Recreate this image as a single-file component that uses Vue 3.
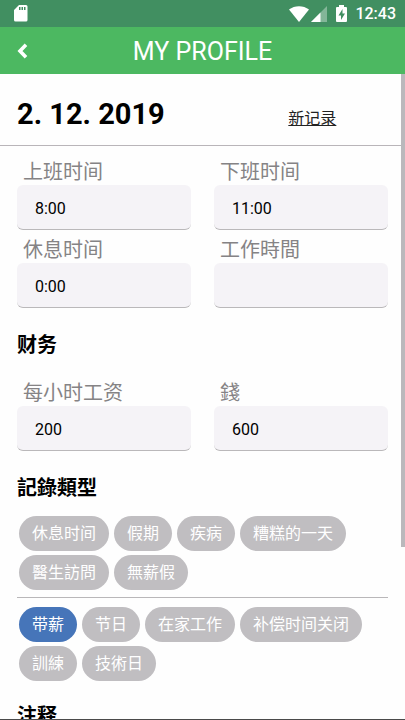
<script setup>
import { ref } from 'vue'

const times = ref([
  { id: 'start', label: '上班时间', lang: 'zh-CN', value: '8:00' },
  { id: 'end', label: '下班时间', lang: 'zh-CN', value: '11:00' },
  { id: 'break', label: '休息时间', lang: 'zh-CN', value: '0:00' },
  { id: 'hours', label: '工作時間', lang: 'zh-TW', value: '' }
])

const money = ref([
  { id: 'rate', label: '每小时工资', lang: 'zh-CN', value: '200' },
  { id: 'total', label: '錢', lang: 'zh-TW', value: '600' }
])

const absences = ['休息时间', '假期', '疾病', '糟糕的一天', '醫生訪問', '無薪假']
const paid = ['带薪', '节日', '在家工作', '补偿时间关闭', '訓練', '技術日']
const selected = ref('带薪')
</script>

<template>
  <div class="screen">
    <div class="status">
      <svg class="sd" width="14" height="17" viewBox="0 0 14 17">
        <path fill="#fff" fill-rule="evenodd" d="M5 0h7a1.500 1.500 0 0 1 1.500 1.500v13.500a1.500 1.500 0 0 1-1.500 1.500H1.500A1.500 1.500 0 0 1 0 15V5zM5 2v3h1.500V2zM7.500 2v3H9V2zM10 2v3h1.500V2z" />
      </svg>
      <div class="indicators">
        <svg class="wifi" width="20" height="16" viewBox="0 0 20 16">
          <path fill="#fff" d="M0 3.500C5.500-1 14.500-1 20 3.500L10 16z" />
        </svg>
        <svg class="signal" width="16" height="16" viewBox="0 0 16 16">
          <path fill="#fff" fill-opacity=".35" d="M16 0v16H0z" />
          <path fill="#fff" d="M9.500 6.500V16H0z" />
        </svg>
        <svg class="battery" width="11" height="17" viewBox="0 0 11 17">
          <path fill="#fff" fill-rule="evenodd" d="M3 0h5v2h2a1 1 0 0 1 1 1v13a1 1 0 0 1-1 1H1a1 1 0 0 1-1-1V3a1 1 0 0 1 1-1h2zM6.500 4L2.500 10.500h2.500V15l4-6.500H6.500z" />
        </svg>
        <span class="clock">12:43</span>
      </div>
    </div>

    <header class="bar">
      <button class="back" type="button" aria-label="Back">
        <svg width="11" height="16" viewBox="0 0 11 16">
          <path d="M9 1.800L3 8l6 6.200" fill="none" stroke="#fff" stroke-width="3.600" />
        </svg>
      </button>
      <h1 class="title">MY PROFILE</h1>
    </header>

    <main class="body">
      <div class="date-row">
        <h2 class="date">2. 12. 2019</h2>
        <a class="new" href="#" lang="zh-CN">新记录</a>
      </div>

      <div class="content">
        <div class="fields">
          <div v-for="f in times" :key="f.id" class="field">
            <label :for="f.id" :lang="f.lang">{{ f.label }}</label>
            <input :id="f.id" v-model="f.value" type="text" />
          </div>
        </div>

        <h3 class="heading" lang="zh-CN">财务</h3>
        <div class="fields finance">
          <div v-for="f in money" :key="f.id" class="field">
            <label :for="f.id" :lang="f.lang">{{ f.label }}</label>
            <input :id="f.id" v-model="f.value" type="text" />
          </div>
        </div>

        <h3 class="heading" lang="zh-TW">記錄類型</h3>
        <div class="chips">
          <button v-for="c in absences" :key="c" type="button" class="chip" :class="{ on: selected === c }" :aria-pressed="selected === c" @click="selected = c">{{ c }}</button>
        </div>
        <hr class="rule" />
        <div class="chips">
          <button v-for="c in paid" :key="c" type="button" class="chip" :class="{ on: selected === c }" :aria-pressed="selected === c" @click="selected = c">{{ c }}</button>
        </div>

        <h3 class="heading notes" lang="zh-CN">注释</h3>
      </div>
      <div class="thumb"></div>
    </main>
  </div>
</template>

<style>
body {
  margin: 0;
}
</style>

<style scoped>
* {
  box-sizing: border-box;
}
.screen {
  display: flex;
  flex-direction: column;
  height: 100vh;
  overflow: hidden;
  background: #fefefe;
  border-bottom: 1px solid #4a4a4a;
  font-family: Roboto, "Noto Sans CJK SC", sans-serif;
  color: #000;
}
.status {
  flex: none;
  display: flex;
  align-items: center;
  justify-content: space-between;
  height: 27px;
  padding: 0 9px 0 14px;
  background: #418f61;
}
.indicators {
  display: flex;
  align-items: center;
}
.signal {
  margin-left: 2px;
}
.battery {
  margin-left: 9px;
}
.clock {
  margin-left: 8px;
  color: #fff;
  font-size: 16px;
  font-weight: 500;
  line-height: 28px;
}
.bar {
  flex: none;
  display: grid;
  grid-template-columns: 48px 1fr 48px;
  height: 47px;
  background: #4cb861;
}
.back {
  display: flex;
  align-items: center;
  padding: 0 0 3px 17px;
  border: 0;
  background: none;
}
.title {
  margin: 0;
  color: #fff;
  font-size: 25px;
  font-weight: 400;
  line-height: 50px;
  text-align: center;
}
.body {
  position: relative;
  flex: 1;
  min-height: 0;
  overflow: hidden;
}
.date-row {
  display: grid;
  grid-template-columns: 2fr 1fr;
  align-items: end;
  height: 72px;
  padding: 0 17px 13px;
  border-bottom: 1px solid #b9b5b9;
}
.date {
  margin: 0;
  font-size: 29px;
  font-weight: 700;
  line-height: 36px;
}
.new {
  justify-self: start;
  margin-left: 24px;
  color: #222;
  font-size: 16px;
  line-height: 26px;
}
.content {
  padding: 13px 17px 0;
}
.fields {
  display: grid;
  grid-template-columns: 1fr 1fr;
  gap: 7px 23px;
}
.finance {
  margin-top: 20px;
}
.field {
  display: flex;
  flex-direction: column;
  min-width: 0;
}
.field label {
  height: 26px;
  padding-left: 6px;
  color: #858385;
  font-size: 20px;
  font-weight: 400;
  line-height: 27px;
}
.field input {
  width: 100%;
  height: 45px;
  padding: 2px 18px 0;
  border: 0;
  border-bottom: 1px solid #bab8ba;
  border-radius: 6px;
  background: #f5f3f7;
  color: #000;
  font-family: inherit;
  font-size: 16px;
}
.heading {
  margin: 22px 0 13px;
  font-size: 20px;
  font-weight: 700;
  line-height: 30px;
}
.notes {
  margin: 20px 0 0;
}
.chips {
  display: flex;
  flex-wrap: wrap;
  gap: 4px 5px;
  padding-left: 2px;
}
.chip {
  height: 35px;
  padding: 1px 13px 0;
  border: 0;
  border-radius: 18px;
  background: #c0bec1;
  color: #fff;
  font-family: inherit;
  font-size: 16px;
  line-height: 34px;
}
.chip.on {
  background: #4675b9;
}
.rule {
  height: 1px;
  margin: 7px 0 9px;
  border: 0;
  background: #b9b7b9;
}
.thumb {
  position: absolute;
  top: 0;
  right: 0;
  width: 4px;
  height: 473px;
  background: #bab8bc;
}
</style>
